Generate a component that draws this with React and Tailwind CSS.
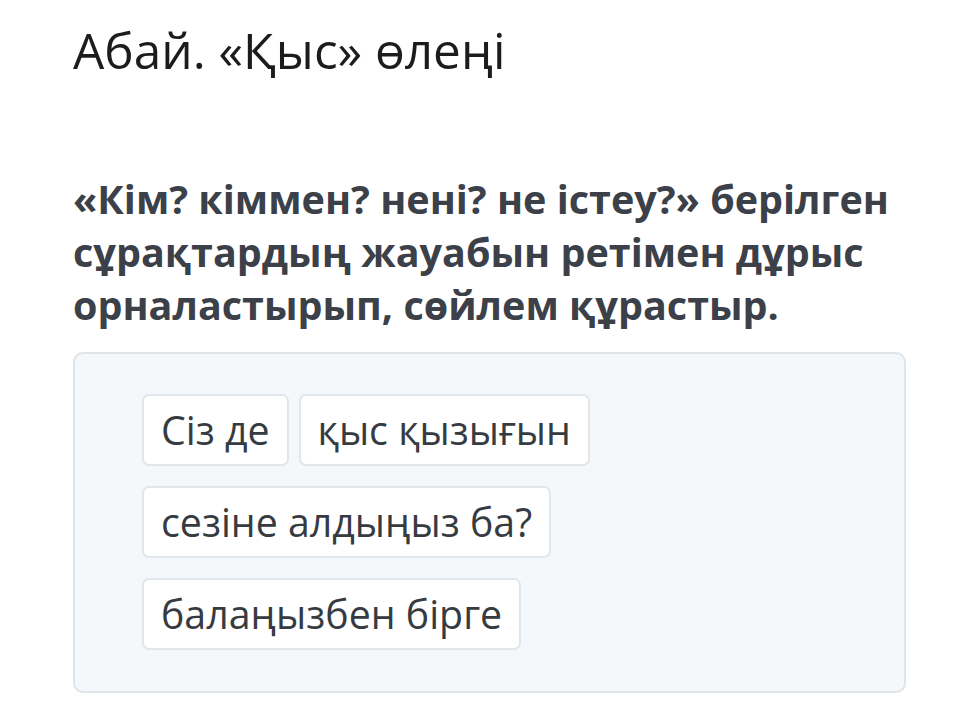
export default function App() {
  const rows = [["Сіз де", "қыс қызығын"], ["сезіне алдыңыз ба?"], ["балаңызбен бірге"]];

  return (
    <div className="min-h-screen bg-white pl-[73px] pr-[49px]" style={{ fontFamily: '"Open Sans", sans-serif' }}>
      <h1 className="pt-[18px] text-[49.5px] leading-[64px] text-[#1c1c1c] font-normal">
        Абай. «Қыс» өлеңі
      </h1>

      <p className="mt-[91px] text-[39.5px] leading-[53px] font-bold text-[#3b4049]">
        «Кім? кіммен? нені? не істеу?» берілген сұрақтардың жауабын ретімен дұрыс орналастырып, сөйлем құрастыр.
      </p>

      <div className="mt-[20px] h-[341px] rounded-[10px] border-2 border-[#dfe4e9] bg-[#f4f8fb] pt-[40px] pl-[67px] flex flex-col gap-[20px]">
        {rows.map((row, i) => (
          <div key={i} className="flex gap-[10px]">
            {row.map((w) => (
              <div
                key={w}
                className="h-[72px] flex items-center px-[17px] rounded-[7px] border-2 border-[#e2e5e9] bg-white text-[39.3px] text-[#363b42]"
              >
                {w}
              </div>
            ))}
          </div>
        ))}
      </div>
    </div>
  );
}
